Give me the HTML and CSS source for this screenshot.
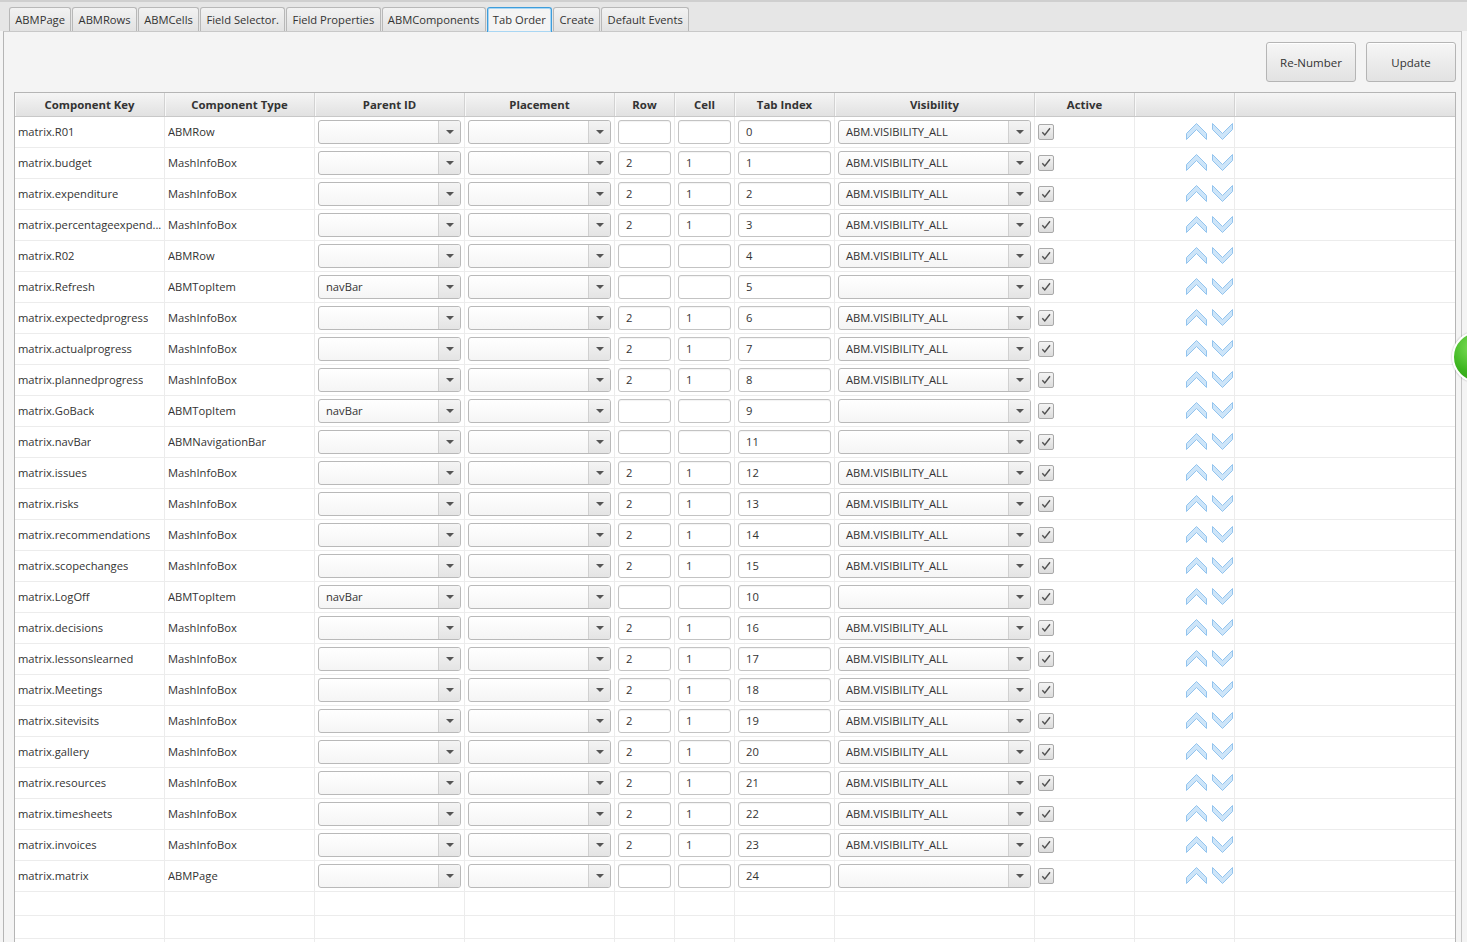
FILE: index.html
```html
<!DOCTYPE html>
<html>
<head>
<meta charset="utf-8">
<link rel="stylesheet" href="styles.css">
</head>
<body>
<div class="app">
  <div class="tabbar">
    <div class="tab">ABMPage</div>
    <div class="tab">ABMRows</div>
    <div class="tab">ABMCells</div>
    <div class="tab">Field Selector.</div>
    <div class="tab">Field Properties</div>
    <div class="tab">ABMComponents</div>
    <div class="tab active">Tab Order</div>
    <div class="tab">Create</div>
    <div class="tab">Default Events</div>
  </div>
  <div class="panel">
    <div class="toolbar">
      <button class="btn">Re-Number</button>
      <button class="btn">Update</button>
    </div>
    <div class="table">
      <div class="thead">
        <div class="th">Component Key</div>
        <div class="th">Component Type</div>
        <div class="th">Parent ID</div>
        <div class="th">Placement</div>
        <div class="th">Row</div>
        <div class="th">Cell</div>
        <div class="th">Tab Index</div>
        <div class="th">Visibility</div>
        <div class="th">Active</div>
        <div class="th"></div>
        <div class="th last"></div>
      </div>
      <div class="tbody" id="tbody"></div>
    </div>
  </div>
  <div class="green-dot"></div>
</div>
<script src="app.js"></script>
</body>
</html>
```

FILE: app.js
```js
var V = "ABM.VISIBILITY_ALL";
var rows = [
  ["matrix.R01","ABMRow","","","","0",V],
  ["matrix.budget","MashInfoBox","","2","1","1",V],
  ["matrix.expenditure","MashInfoBox","","2","1","2",V],
  ["matrix.percentageexpend...","MashInfoBox","","2","1","3",V],
  ["matrix.R02","ABMRow","","","","4",V],
  ["matrix.Refresh","ABMTopItem","navBar","","","5",""],
  ["matrix.expectedprogress","MashInfoBox","","2","1","6",V],
  ["matrix.actualprogress","MashInfoBox","","2","1","7",V],
  ["matrix.plannedprogress","MashInfoBox","","2","1","8",V],
  ["matrix.GoBack","ABMTopItem","navBar","","","9",""],
  ["matrix.navBar","ABMNavigationBar","","","","11",""],
  ["matrix.issues","MashInfoBox","","2","1","12",V],
  ["matrix.risks","MashInfoBox","","2","1","13",V],
  ["matrix.recommendations","MashInfoBox","","2","1","14",V],
  ["matrix.scopechanges","MashInfoBox","","2","1","15",V],
  ["matrix.LogOff","ABMTopItem","navBar","","","10",""],
  ["matrix.decisions","MashInfoBox","","2","1","16",V],
  ["matrix.lessonslearned","MashInfoBox","","2","1","17",V],
  ["matrix.Meetings","MashInfoBox","","2","1","18",V],
  ["matrix.sitevisits","MashInfoBox","","2","1","19",V],
  ["matrix.gallery","MashInfoBox","","2","1","20",V],
  ["matrix.resources","MashInfoBox","","2","1","21",V],
  ["matrix.timesheets","MashInfoBox","","2","1","22",V],
  ["matrix.invoices","MashInfoBox","","2","1","23",V],
  ["matrix.matrix","ABMPage","","","","24",""]
];
function combo(v){
  return '<div class="combo"><span class="combo-text">'+v+'</span><span class="combo-arrow"><span class="tri"></span></span></div>';
}
function field(v){ return '<div class="field">'+v+'</div>'; }
var up = '<svg class="arr" width="21" height="18" viewBox="0 0 21 18"><polygon points="0.5,10.5 10.5,0.5 20.5,10.5 20.5,16.5 10.5,6.5 0.5,16.5" fill="#cde5f9" stroke="#93c4ee" stroke-width="1" stroke-linejoin="miter"/></svg>';
var dn = '<svg class="arr" width="21" height="18" viewBox="0 0 21 18"><polygon points="0.5,0.5 10.5,10.5 20.5,0.5 20.5,6.5 10.5,16.5 0.5,6.5" fill="#cde5f9" stroke="#93c4ee" stroke-width="1" stroke-linejoin="miter"/></svg>';
var chk = '<div class="check"><svg width="12" height="12" viewBox="0 0 12 12"><path d="M2.3 6.3 L4.8 9 L10 2.3" fill="none" stroke="#505050" stroke-width="1.4"/></svg></div>';
var html = "";
rows.forEach(function(r){
  html += '<div class="tr">'
    + '<div class="td txt"><span class="ell">'+r[0]+'</span></div>'
    + '<div class="td txt"><span class="ell">'+r[1]+'</span></div>'
    + '<div class="td ctl">'+combo(r[2])+'</div>'
    + '<div class="td ctl">'+combo("")+'</div>'
    + '<div class="td ctl">'+field(r[3])+'</div>'
    + '<div class="td ctl">'+field(r[4])+'</div>'
    + '<div class="td ctl">'+field(r[5])+'</div>'
    + '<div class="td ctl">'+combo(r[6])+'</div>'
    + '<div class="td ctl">'+chk+'</div>'
    + '<div class="td arrows">'+up+dn+'</div>'
    + '<div class="td last"></div>'
    + '</div>';
});
for (var i=0;i<3;i++){
  html += '<div class="tr empty">';
  for (var j=0;j<10;j++) html += '<div class="td"></div>';
  html += '<div class="td last"></div></div>';
}
document.getElementById("tbody").innerHTML = html;
```

FILE: styles.css
```css
* { box-sizing: border-box; }
html, body { margin: 0; padding: 0; }
body {
  width: 1467px;
  height: 942px;
  overflow: hidden;
  font-family: "Open Sans", "Liberation Sans", sans-serif;
  font-size: 11.2px;
  color: #333;
  background: #f4f4f4;
}
.app { position: relative; width: 1467px; height: 942px; overflow: hidden; }

.tabbar {
  height: 31px;
  background: #e6e6e6;
  border-top: 2px solid #cfcfcf;
  display: flex;
  align-items: flex-end;
  padding-left: 9px;
  gap: 1px;
  font-size: 11.2px;
}
.tab {
  height: 24px;
  padding: 0 5.3px 1px;
  display: flex;
  align-items: center;
  border: 1px solid #b8b8b8;
  border-bottom: none;
  border-radius: 3px 3px 0 0;
  background: linear-gradient(#f2f2f2, #e2e2e2);
  color: #333;
  white-space: nowrap;
}
.tab.active {
  background: #f4f4f4;
  border-color: #3e9ddb;
  box-shadow: inset 0 0 0 1px #a9d6f3;
  height: 25px;
  padding-bottom: 2px;
  margin-bottom: -1px;
  position: relative;
  z-index: 1;
}

.panel {
  margin-left: 3px;
  width: 1459px;
  height: 911px;
  border-left: 1px solid #b5b5b5;
  border-right: 1px solid #c5c5c5;
  border-top: 1px solid #c8c8c8;
  background: #f4f4f4;
  padding: 10px 5px 0 10px;
}
.toolbar {
  display: flex;
  justify-content: flex-end;
  gap: 10px;
  height: 40px;
  margin-bottom: 10px;
}
.btn {
  width: 90px;
  height: 40px;
  font-family: inherit;
  font-size: 11.5px;
  color: #333;
  border: 1px solid #b5b5b5;
  border-radius: 3px;
  background: linear-gradient(#f6f6f6, #e2e2e2);
  box-shadow: inset 0 1px 0 #fff;
  padding: 0;
}

.table {
  width: 1442px;
  border: 1px solid #b5b5b5;
  background: #fff;
}
.thead, .tr {
  display: grid;
  grid-template-columns: 150px 150px 150px 150px 60px 60px 100px 200px 100px 100px 1fr;
}
.thead {
  height: 24px;
  background: linear-gradient(#f5f5f5, #e1e1e1);
  border-bottom: 1px solid #c8c8c8;
}
.th {
  border-right: 1px solid #d2d2d2;
  font-weight: 700;
  font-size: 11.4px;
  display: flex;
  align-items: center;
  justify-content: center;
  padding-bottom: 1px;
  box-shadow: inset 1px 0 0 #f8f8f8;
}
.th.last { border-right: none; }

.tr {
  height: 31px;
  border-bottom: 1px solid #ececec;
}
.tr.empty { height: 23.5px; }
.td {
  border-right: 1px solid #ececec;
  display: flex;
  align-items: center;
  min-width: 0;
}
.td.last { border-right: none; }
.td.txt {
  padding: 0 2px 2px 3px;
}
.ell {
  display: block;
  white-space: nowrap;
  overflow: hidden;
  text-overflow: ellipsis;
}
.td.ctl { padding: 0 3px 0 3px; }

.combo {
  flex: 1;
  height: 24px;
  border: 1px solid #b9b9b9;
  border-radius: 3px;
  background: linear-gradient(#ffffff, #f5f5f5);
  display: flex;
  align-items: stretch;
}
.combo-text {
  flex: 1;
  display: flex;
  align-items: center;
  padding: 0 0 1px 7px;
  white-space: nowrap;
  overflow: hidden;
}
.combo-arrow {
  width: 22px;
  border-left: 1px solid #d0d0d0;
  background: linear-gradient(#f4f4f4, #e4e4e4);
  border-radius: 0 2px 2px 0;
  display: flex;
  align-items: center;
  justify-content: center;
}
.tri {
  width: 0; height: 0;
  border-left: 4px solid transparent;
  border-right: 4px solid transparent;
  border-top: 4px solid #555;
}
.field {
  flex: 1;
  height: 24px;
  border: 1px solid #c3c3c3;
  border-radius: 3px;
  background: #fff;
  box-shadow: inset 0 1px 1px rgba(0,0,0,0.05);
  display: flex;
  align-items: center;
  padding: 0 0 1px 7px;
}
.check {
  width: 16px;
  height: 16px;
  border: 1px solid #a9a9a9;
  border-radius: 2px;
  background: linear-gradient(#f4f4f4, #dcdcdc);
  display: flex;
  align-items: center;
  justify-content: center;
}
.td.arrows {
  justify-content: flex-end;
  padding-right: 1px;
  gap: 5px;
}
.arr { display: block; }

.green-dot {
  position: absolute;
  left: 1452px;
  top: 331px;
  width: 52px;
  height: 52px;
  border-radius: 50%;
  border: 2px solid #fff;
  box-shadow: 0 0 2px rgba(0,0,0,0.35);
  background: radial-gradient(circle at 40% 30%, #7fe05a, #3cb51f 55%, #2a9414);
}
```
